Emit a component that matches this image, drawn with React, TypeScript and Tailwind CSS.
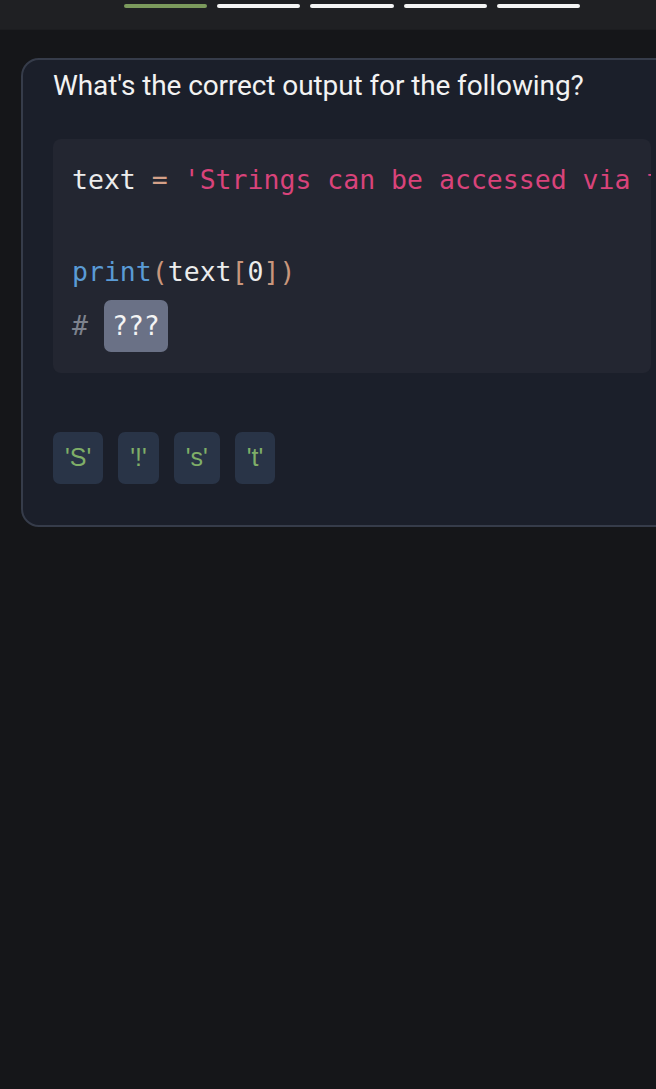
import React from "react";

const mono = { fontFamily: "'DejaVu Sans Mono', 'Liberation Mono', monospace" };

export default function App() {
  const options = ["'S'", "'!'", "'s'", "'t'"];
  return (
    <div className="min-h-screen w-[656px] overflow-hidden bg-[#151619] font-['Roboto',sans-serif]">
      {/* Progress header */}
      <div className="flex h-[30px] gap-[10px] border-b border-[#1c1d20] bg-[#1f2023] pl-[124px] pt-[4px]">
        <div className="h-[4px] w-[83px] rounded-full bg-[#7b9a5c]" />
        <div className="h-[4px] w-[83px] rounded-full bg-[#f4f4f4]" />
        <div className="h-[4px] w-[84px] rounded-full bg-[#f4f4f4]" />
        <div className="h-[4px] w-[83px] rounded-full bg-[#f4f4f4]" />
        <div className="h-[4px] w-[83px] rounded-full bg-[#f4f4f4]" />
      </div>

      {/* Question card */}
      <div className="ml-[21px] mt-[28px] w-[664px] rounded-[18px] border-2 border-[#363c4a] bg-[#1b1f2a] px-[30px] pb-[41px] pt-[10px]">
        <h1 className="text-[28px] leading-[32px] tracking-[-0.1px] text-[#f2f2f2]">What's the correct output for the following?</h1>

        <div
          className="mt-[37px] w-[598px] overflow-hidden rounded-[8px] bg-[#232631] pb-[21px] pl-[19px] pt-[18px] text-[26.5px] whitespace-pre"
          style={mono}
        >
          <div className="leading-[46px]">
            <span className="text-[#ececec]">text</span>
            <span className="text-[#d4a088]"> = </span>
            <span className="text-[#d9437a]">'Strings can be accessed via their index'</span>
          </div>
          <div className="h-[46px]" />
          <div className="leading-[46px]">
            <span className="text-[#5a9bd6]">print</span>
            <span className="text-[#c9967c]">(</span>
            <span className="text-[#ececec]">text</span>
            <span className="text-[#c9967c]">[</span>
            <span className="text-[#ececec]">0</span>
            <span className="text-[#c9967c]">])</span>
          </div>
          <div className="mt-[5px] flex h-[52px] items-center">
            <span className="text-[#7d828d]"># </span>
            <span className="flex h-[52px] items-center rounded-[7px] bg-[#6a7186] px-[8px] text-[#f4f4f4]">???</span>
          </div>
        </div>

        <div className="mt-[59px] flex gap-[15px]">
          {options.map((o) => (
            <div
              key={o}
              className="flex h-[52px] items-center rounded-[7px] bg-[#293447] px-[12px] text-[25px] text-[#7fae68] font-['Liberation_Sans',sans-serif]"
            >
              {o}
            </div>
          ))}
        </div>
      </div>
    </div>
  );
}
